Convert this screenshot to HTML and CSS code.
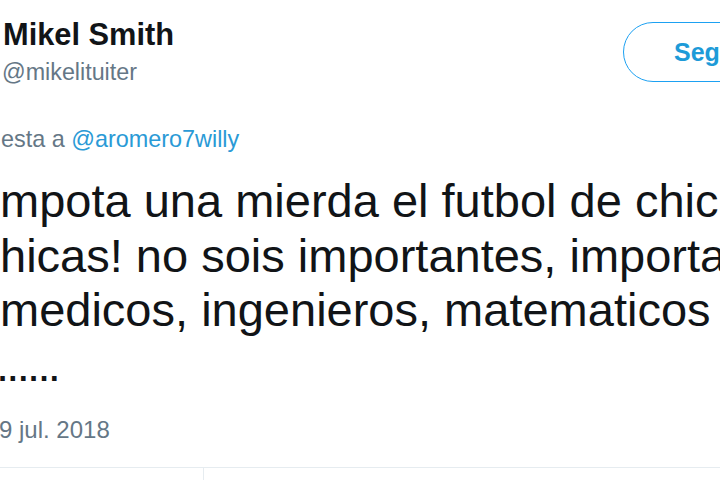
FILE: index.html
```html
<!DOCTYPE html>
<html lang="es">
<head>
<meta charset="utf-8">
<title>Tweet</title>
<link rel="stylesheet" href="styles.css">
</head>
<body>
<div class="tweet">
  <header class="head">
    <div class="ident">
      <div class="name">Mikel Smith</div>
      <div class="handle">@mikelituiter</div>
    </div>
    <button class="follow">Seguir</button>
  </header>
  <div class="reply">esta a <a class="mention">@aromero7willy</a></div>
  <p class="text">
    <span class="line">mpota una mierda el futbol de chicas</span>
    <span class="line">hicas! no sois importantes, importantes</span>
    <span class="line">medicos, ingenieros, matematicos y</span>
    <span class="line dots">......</span>
  </p>
  <div class="date">9 jul. 2018</div>
  <div class="stats">
    <div class="cell first"></div>
    <div class="cell"></div>
  </div>
</div>
</body>
</html>
```
FILE: styles.css
```css
html, body {
  margin: 0;
  padding: 0;
  background: #ffffff;
}
body {
  width: 720px;
  height: 480px;
  overflow: hidden;
  font-family: "Liberation Sans", Arial, sans-serif;
  color: #14171a;
}
.tweet {
  width: 720px;
}
.head {
  display: flex;
  justify-content: space-between;
  align-items: flex-start;
  padding-top: 18px;
}
.ident {
  display: flex;
  flex-direction: column;
}
.name {
  font-weight: bold;
  font-size: 30.8px;
  line-height: 34px;
  padding-left: 3px;
  color: #111417;
}
.handle {
  font-size: 23.3px;
  line-height: 28px;
  margin-top: 6px;
  padding-left: 2px;
  color: #657786;
}
.follow {
  flex: none;
  box-sizing: border-box;
  width: 140px;
  height: 60px;
  margin-top: 4px;
  margin-right: -43px;
  padding: 0 0 0 50px;
  text-align: left;
  border: 1.5px solid #1da1f2;
  border-radius: 30px;
  background: #ffffff;
  color: #1d9bd8;
  font-family: "Liberation Sans", Arial, sans-serif;
  font-weight: bold;
  font-size: 25px;
  line-height: 56px;
}
.reply {
  margin-top: 38px;
  font-size: 23.4px;
  line-height: 30px;
  padding-left: 1px;
  color: #657786;
  white-space: nowrap;
}
.mention {
  color: #2a9ad6;
  text-decoration: none;
}
.text {
  margin: 20px 0 0 0;
  font-size: 47px;
  line-height: 54.5px;
  color: #111417;
}
.line {
  display: block;
  white-space: nowrap;
  overflow: hidden;
}
.dots {
  margin-left: -4px;
  letter-spacing: -2.7px;
}
.date {
  margin-top: 24px;
  font-size: 24px;
  line-height: 28px;
  margin-left: -1px;
  color: #657786;
}
.stats {
  margin-top: 23px;
  display: flex;
  border-top: 1px solid #e6ecf0;
  height: 20px;
}
.cell {
  flex: 1;
}
.cell.first {
  flex: none;
  width: 203px;
  border-right: 1px solid #e6ecf0;
}
```
